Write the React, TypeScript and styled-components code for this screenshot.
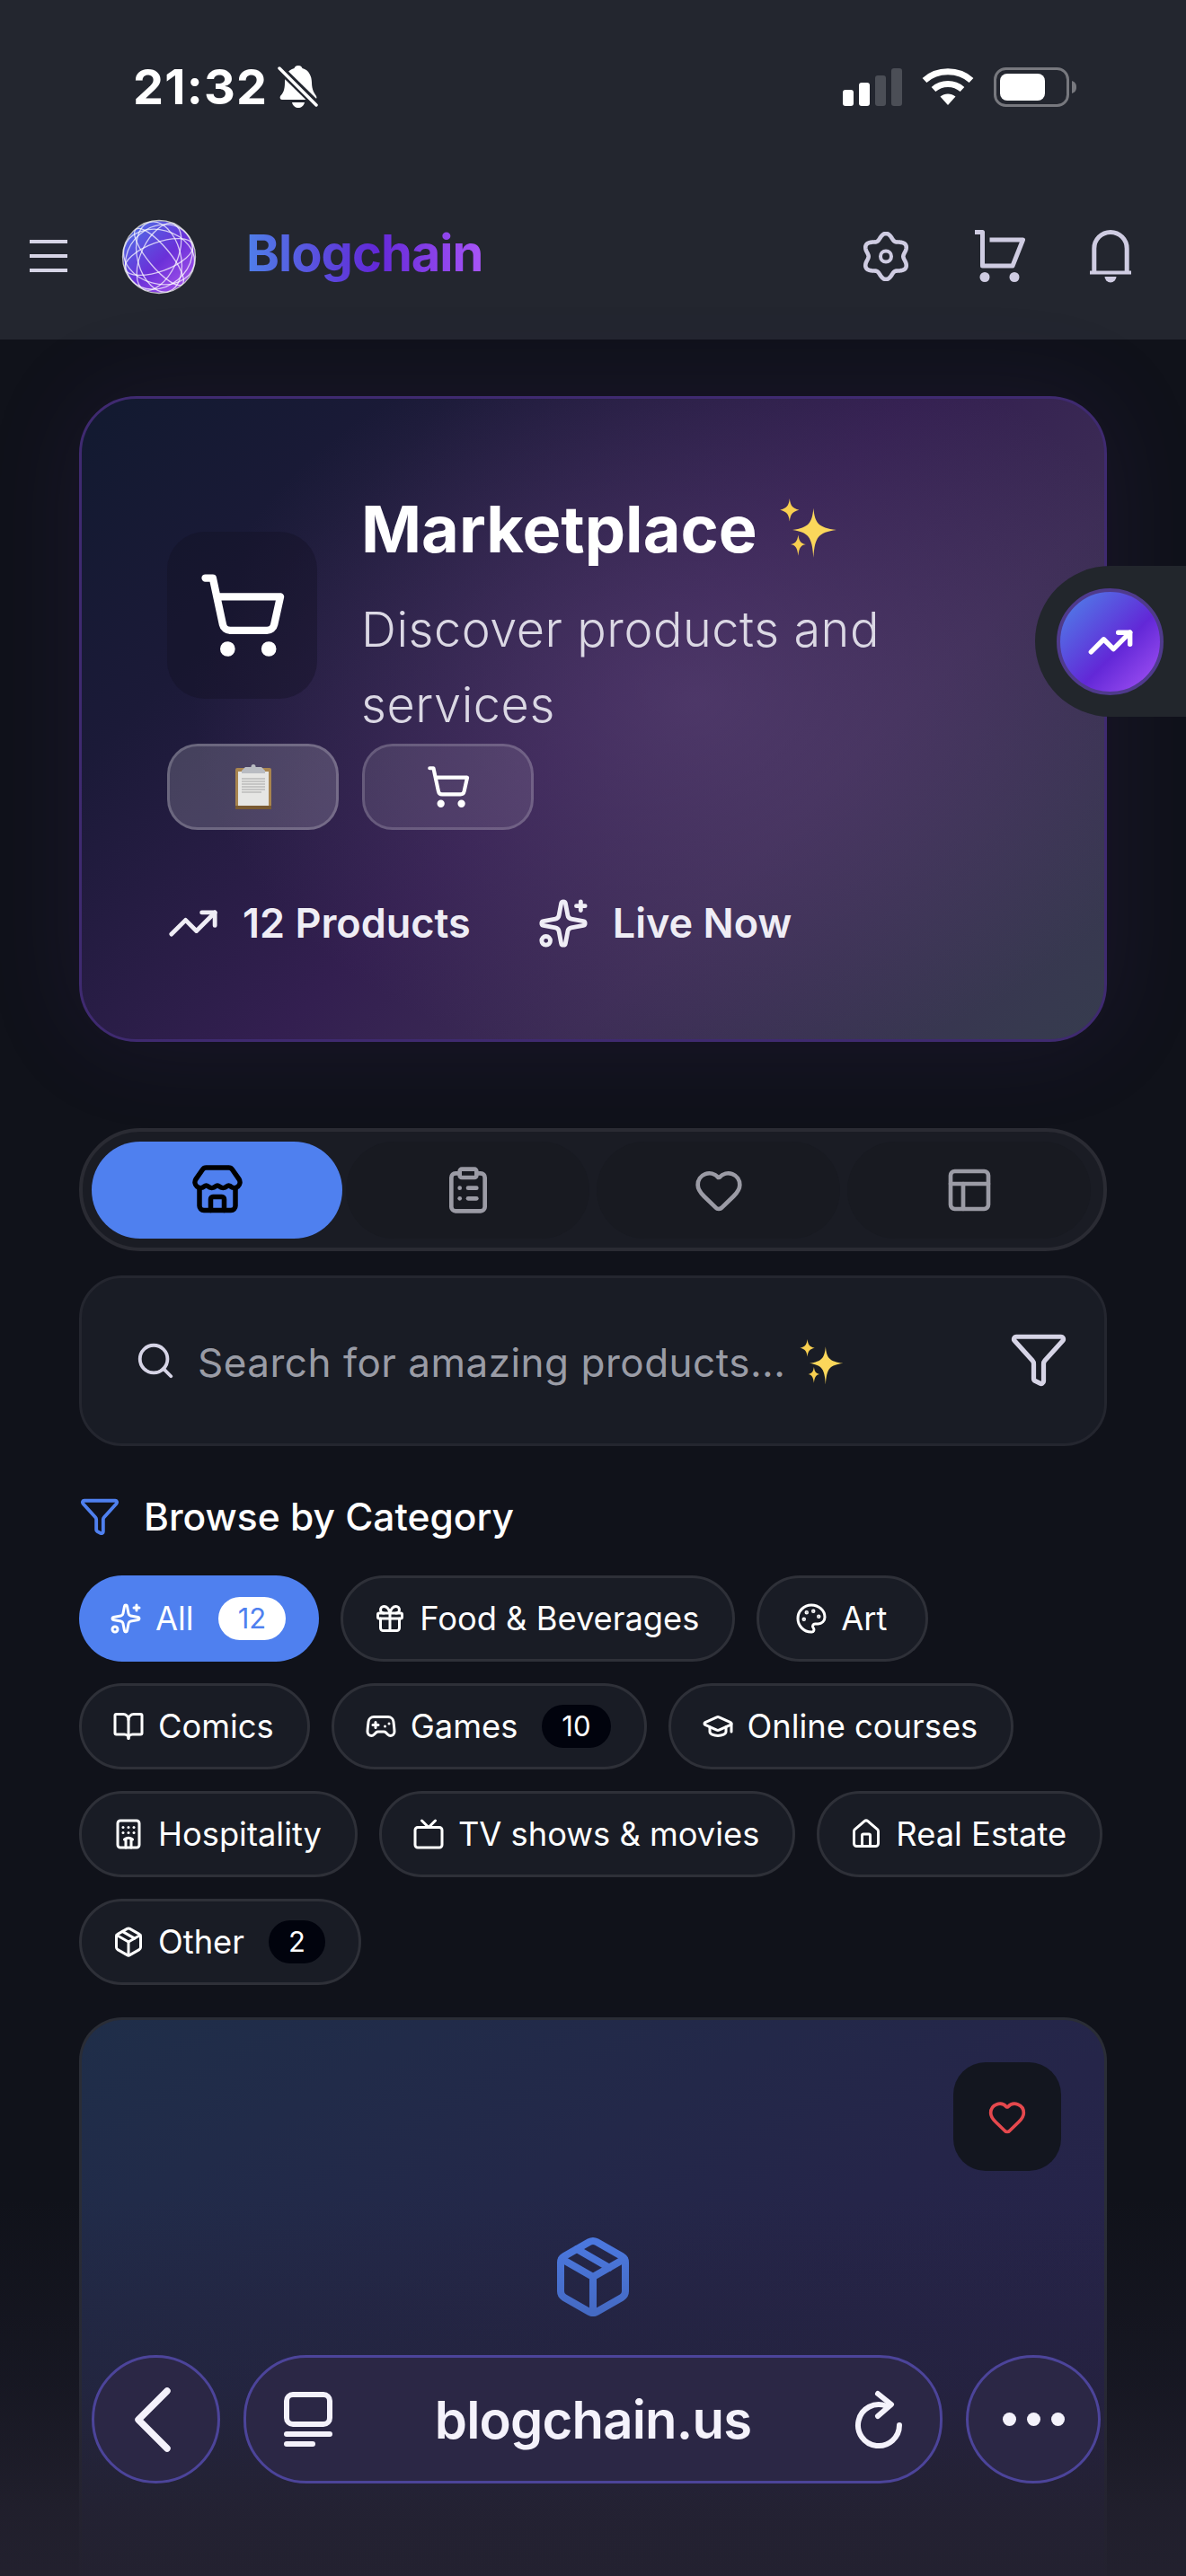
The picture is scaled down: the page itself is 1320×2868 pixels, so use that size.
import React from "react";
import styled, { createGlobalStyle } from "styled-components";
import {
  ShoppingCart, TrendingUp, Sparkles, Store, ClipboardList, Heart,
  PanelsTopLeft, Search, Funnel, Gift, Palette, BookOpen, Gamepad2, GraduationCap, Hotel, Tv,
  House, Package, ChevronLeft,
} from "lucide-react";

const Global = createGlobalStyle`
  html, body { margin: 0; padding: 0; background: #10121a; }
  * { box-sizing: border-box; }
  body { font-family: Inter, "Noto Sans", sans-serif; -webkit-font-smoothing: antialiased; }
`;

const Page = styled.div`
  position: relative; width: 1320px; height: 2868px; overflow: hidden; background: #10121a; color: #fff;
`;
const Header = styled.header`background: #23262f; height: 378px;`;
const StatusBar = styled.div`
  height: 194px; display: flex; align-items: center; justify-content: space-between;
  padding: 0 122px 0 148px;
`;
const TimeGroup = styled.div`display: flex; align-items: center; gap: 11px;`;
const Time = styled.span`font-size: 54px; font-weight: 700; letter-spacing: 1.2px; line-height: 1;`;
const StatusIcons = styled.div`display: flex; align-items: center; gap: 22px;`;
const NavRow = styled.div`
  height: 184px; display: flex; align-items: center; padding: 0 61px 0 33px;
`;
const Brand = styled.div`display: flex; align-items: center; flex: 1;`;
const HamburgerSlot = styled.span`display: flex; margin-right: 59px; margin-top: -2px;`;
const Wordmark = styled.span`
  margin: -6px 0 0 54px; font-size: 56px; font-weight: 700; letter-spacing: -1px; line-height: 1.2;
  background: linear-gradient(90deg, #4f7fe8, #6228d7 55%, #a855f7);
  -webkit-background-clip: text; background-clip: text; color: transparent;
`;
const NavIcons = styled.div`display: flex; align-items: center; gap: 72px; margin-top: -2px;`;

const Main = styled.main`padding: 63px 88px 0;`;
const Hero = styled.section`
  height: 719px; border: 3px solid #3f2a70; border-radius: 64px; padding: 99px 95px 0;
  background:
    radial-gradient(ellipse 560px 420px at 60% 47%, rgba(96,72,122,.55), rgba(96,72,122,0) 100%),
    linear-gradient(135deg, #121a30 0%, #1b1a38 22%, #331f50 50%, #3c2c55 68%, #363c4e 100%);
  box-shadow: 0 0 110px rgba(90,50,170,.13);
`;
const HeroTop = styled.div`display: flex; align-items: center; gap: 49px;`;
const HeroIconBox = styled.div`
  width: 167px; height: 186px; flex: none; border-radius: 42px; background: rgba(18,16,36,.42);
  display: flex; align-items: center; justify-content: center; color: #fff;
`;
const HeroText = styled.div`flex: 1;`;
const HeroTitle = styled.h1`
  margin: 0 0 24px; font-size: 72px; line-height: 92px; font-weight: 700; display: flex; align-items: center; gap: 22px;
`;
const HeroSub = styled.p`
  margin: 0; font-size: 54px; line-height: 84px; font-weight: 300; color: #dbd8e4; width: 640px; letter-spacing: .55px;
`;
const PillRow = styled.div`display: flex; gap: 26px; margin-top: 1px;`;
const Pill = styled.button<{ $on?: boolean }>`
  width: 191px; height: 96px; border-radius: 34px; padding: 0; color: #fff;
  border: 3px solid ${(p) => (p.$on ? "rgba(255,255,255,.2)" : "rgba(255,255,255,.17)")};
  background: ${(p) => (p.$on ? "rgba(255,255,255,.17)" : "rgba(255,255,255,.1)")};
  display: flex; align-items: center; justify-content: center;
`;
const Stats = styled.div`display: flex; gap: 74px; margin-top: 76px; height: 56px; align-items: center;`;
const Stat = styled.div`
  display: flex; align-items: center; gap: 26px; font-size: 45px; font-weight: 600; color: #efedf5; line-height: 56px;
`;

const Tabs = styled.nav`
  margin-top: 96px; height: 137px; border: 4px solid #2a2b33; border-radius: 68px; background: #1a1c24;
  padding: 11px 10px; display: grid; grid-template-columns: repeat(4, 1fr);
`;
const Tab = styled.button<{ $on?: boolean }>`
  border: 0; padding: 0; height: 108px; border-radius: 54px; display: flex; align-items: center; justify-content: center;
  background: ${(p) => (p.$on ? "#4f80ef" : "#181a21")}; color: ${(p) => (p.$on ? "#000" : "#9b9ba5")};
  margin: ${(p) => (p.$on ? "0" : "0 4px")};
`;
const SearchBox = styled.div`
  margin-top: 27px; height: 190px; border: 3px solid #24262f; border-radius: 48px; background: #191c25;
  display: flex; align-items: center; padding: 0 40px 0 59px;
`;
const SearchIconSlot = styled.span`display: flex; color: #d6d4e6; margin-right: 24px;`;
const Placeholder = styled.span`
  flex: 1; display: flex; align-items: center; gap: 14px; font-size: 44px; color: #9a9ca6; font-weight: 400;
  letter-spacing: .5px; margin-top: 4px;
`;
const FilterSlot = styled.span`display: flex; color: #d6d4e6; margin-top: -4px;`;

const CatHead = styled.h2`
  margin: 50px 0 0; height: 56px; display: flex; align-items: center; gap: 26px; font-size: 42.5px; font-weight: 500; color: #fff;
`;
const CatIcon = styled.span`display: flex; color: #4f80ef;`;
const Chips = styled.div`margin-top: 38px; display: flex; flex-wrap: wrap; gap: 24px;`;
const Chip = styled.button<{ $on?: boolean }>`
  height: 96px; min-width: 191px; border-radius: 48px; padding: 0 37px 0 34px; display: flex; align-items: center;
  justify-content: center; gap: 15px;
  font-family: inherit; font-size: 36.3px; font-weight: 400; color: #fff; white-space: nowrap;
  background: ${(p) => (p.$on ? "#4f80ef" : "#191c25")};
  border: ${(p) => (p.$on ? "0" : "3px solid #2e3038")};
`;
const Badge = styled.span<{ $on?: boolean }>`
  margin-left: 12px; height: 48px; padding: 0 22px; border-radius: 24px; font-size: 31px; line-height: 48px;
  background: ${(p) => (p.$on ? "#fff" : "#01030d")}; color: ${(p) => (p.$on ? "#4f80ef" : "#fff")};
`;
const Card = styled.article`
  margin-top: 36px; height: 900px; border: 3px solid #2a2d36; border-bottom: 0; border-radius: 48px; position: relative;
  background: linear-gradient(150deg, #1f2e49 0%, #252549 45%, #281f4b 100%);
  display: flex; justify-content: center; padding-top: 238px; color: #4f80ef;
`;
const FavButton = styled.button`
  position: absolute; top: 47px; right: 48px; width: 120px; height: 121px; border: 0; border-radius: 36px;
  background: #13161f; color: #e5484d; display: flex; align-items: center; justify-content: center;
`;

const SideDock = styled.div`
  position: absolute; top: 630px; right: 0; width: 168px; height: 168px; border-radius: 84px 0 0 84px; background: #22262c;
  padding: 25px 0 0 24px;
`;
const SideButton = styled.button`
  width: 119px; height: 119px; border-radius: 50%; border: 4px solid #4f3a8c; padding: 0; color: #fff;
  background: linear-gradient(135deg, #4f7fe8 5%, #6228d7 58%, #a855f7 100%);
  display: flex; align-items: center; justify-content: center;
`;

const BrowserBar = styled.div`
  position: absolute; left: 0; right: 0; bottom: 0; height: 420px;
  background: linear-gradient(to bottom, rgba(34,32,48,0) 0%, rgba(34,32,48,.38) 50%, rgba(35,33,47,.86) 82%, rgba(35,33,47,.96) 100%);
  display: flex; align-items: flex-end; gap: 26px; padding: 0 95px 103px 102px;
`;
const RoundBtn = styled.button<{ $w: number }>`
  width: ${(p) => p.$w}px; height: 143px; flex: none; border-radius: 50%; padding: 0; color: #f4f2fb;
  border: 3px solid #4c449a; background: #2b2745; display: flex; align-items: center; justify-content: center; gap: 12px;
  overflow: hidden;
`;
const ChevronSlot = styled.span`display: flex; margin-left: -8px;`;
const UrlPill = styled.div`
  flex: 1; height: 143px; border-radius: 70px; border: 3px solid #4c449a; background: #2b2745;
  display: flex; align-items: center; justify-content: space-between; padding: 0 40px 0 42px; color: #f4f2fb;
`;
const UrlText = styled.span`font-size: 58px; font-weight: 600; letter-spacing: -.8px; line-height: 1;`;
const Dot = styled.span`width: 15px; height: 15px; border-radius: 50%; background: #f4f2fb;`;

const Sparkle = ({ size }: { size: number }) => (
  <svg width={size} height={size} viewBox="0 0 64 64">
    <path fill="#fbd75b" d="M38 10 C39.5 26 43 30 62 33 C43 36 39.5 40 38 62 C36.5 40 33 36 16 33 C33 30 36.5 26 38 10Z" />
    <path fill="#f8cf50" d="M13 0 C14 8 16 10 23 12 C16 14 14 16 13 24 C12 16 10 14 3 12 C10 10 12 8 13 0Z" />
    <path fill="#f8cf50" d="M22 38 C23 45 25 47 30 48 C25 49 23 51 22 60 C21 51 19 49 14 48 C19 47 21 45 22 38Z" />
  </svg>
);

const Clipboard = () => (
  <svg width="40" height="50" viewBox="0 0 40 50">
    <rect x="0" y="4" width="40" height="46" rx="2" fill="#a9854f" />
    <rect x="0" y="46" width="40" height="4" fill="#7a5a32" />
    <rect x="3" y="8" width="34" height="38" fill="#e6e6e4" />
    <g stroke="#a5a5a5" strokeWidth="1">
      <path d="M7 16h26M7 19h26M7 22h26M7 25h26M7 28h26M7 31h22" />
    </g>
    <path d="M7 7 L11 3 h18 l4 4 v3 H7z" fill="#b9bcc2" />
    <circle cx="20" cy="2.5" r="2.5" fill="#b9bcc2" />
  </svg>
);

const Globe = () => (
  <svg width="86" height="86" viewBox="0 0 86 86">
    <defs>
      <linearGradient id="gl" x1="0.1" y1="0.05" x2="0.9" y2="0.95">
        <stop offset="0" stopColor="#4f6fe6" /><stop offset=".55" stopColor="#6a30d8" /><stop offset="1" stopColor="#a855ec" />
      </linearGradient>
    </defs>
    <circle cx="43" cy="43" r="40" fill="url(#gl)" />
    <g fill="none" stroke="#fff" strokeOpacity=".72" strokeWidth="1.3">
      <circle cx="43" cy="43" r="40.5" />
      <ellipse cx="43" cy="43" rx="40" ry="16" transform="rotate(-20 43 43)" />
      <ellipse cx="43" cy="43" rx="40" ry="30" transform="rotate(15 43 43)" />
      <ellipse cx="43" cy="43" rx="40" ry="12" transform="rotate(50 43 43)" />
      <ellipse cx="43" cy="43" rx="40" ry="24" transform="rotate(75 43 43)" />
      <ellipse cx="43" cy="43" rx="40" ry="20" transform="rotate(115 43 43)" />
      <ellipse cx="43" cy="43" rx="40" ry="33" transform="rotate(140 43 43)" />
    </g>
  </svg>
);

const BellSlash = () => (
  <svg width="46" height="48" viewBox="0 0 46 48" fill="#fff">
    <path d="M23 0 C26 0 27 1.500 27.500 3 C35 5 38 12 38 19 C38 27 41 31 43 34 C44 36 43 38 41 38 H5 C3 38 2 36 3 34 C6 31 8 27 8 19 C8 12 11 5 18.500 3 C19 1.500 20 0 23 0Z" />
    <path d="M16 41 H30 C29 45 26 47 23 47 C20 47 17 45 16 41Z" />
    <path d="M3 4 L44 44" stroke="#23262f" strokeWidth="9" />
    <path d="M2 3 L43 44" stroke="#fff" strokeWidth="3.500" strokeLinecap="round" />
  </svg>
);

const Signal = () => (
  <svg width="66" height="42" viewBox="0 0 66 42">
    <rect x="0" y="24" width="12" height="18" rx="3" fill="#fff" />
    <rect x="18" y="16" width="12" height="26" rx="3" fill="#fff" />
    <rect x="36" y="8" width="12" height="34" rx="3" fill="#4b4e56" />
    <rect x="54" y="0" width="12" height="42" rx="3" fill="#4b4e56" />
  </svg>
);

const Wifi = () => (
  <svg width="58" height="42" viewBox="0 0 58 42" fill="none" stroke="#fff" strokeWidth="7">
    <path d="M3 13.500 C17 0.500 41 0.500 55 13.500" />
    <path d="M13 23.500 C22 15.500 36 15.500 45 23.500" />
    <path d="M29 41 L20.500 31.500 C25.500 27.500 32.500 27.500 37.500 31.500 Z" fill="#fff" stroke="none" />
  </svg>
);

const Battery = () => (
  <svg width="92" height="44" viewBox="0 0 92 44">
    <rect x="1.500" y="1.500" width="81" height="41" rx="12" fill="none" stroke="#77787e" strokeWidth="3" />
    <rect x="7" y="7" width="50" height="30" rx="8" fill="#fff" />
    <path d="M87 15 c3 1 5 3 5 7 s-2 6-5 7z" fill="#77787e" />
  </svg>
);

const Hamburger = () => (
  <svg width="42" height="36" viewBox="0 0 42 36" fill="#d6d4e6">
    <rect y="0" width="42" height="4" />
    <rect y="16" width="42" height="4" />
    <rect y="32" width="42" height="4" />
  </svg>
);

const gearPath = (() => {
  const pts: string[] = [];
  for (let i = 0; i < 120; i++) {
    const t = (i / 120) * Math.PI * 2;
    const r = 22.4 + 3.1 * Math.cos(6 * t);
    const x = 27 + r * Math.sin(t);
    const y = 27.5 - r * Math.cos(t);
    pts.push(`${x.toFixed(2)} ${y.toFixed(2)}`);
  }
  return `M${pts.join("L")}Z`;
})();

const Gear = () => (
  <svg width="54" height="55" viewBox="0 0 54 55" fill="none" stroke="#cfcce2" strokeWidth="4.600">
    <path d={gearPath} strokeLinejoin="round" />
    <circle cx="27" cy="27.500" r="6" strokeWidth="4" />
  </svg>
);

const NavCart = () => (
  <svg width="56" height="58" viewBox="0 0 56 58" fill="none" stroke="#cfcce2" strokeWidth="5">
    <path d="M0 2.500 H8.500 V40 H42 L53.500 11 H16.500" strokeLinejoin="round" />
    <circle cx="11" cy="52.500" r="5.500" fill="#cfcce2" stroke="none" />
    <circle cx="44" cy="52.500" r="5.500" fill="#cfcce2" stroke="none" />
  </svg>
);

const NavBell = () => (
  <svg width="46" height="59" viewBox="0 0 46 59" fill="none" stroke="#cfcce2" strokeWidth="5">
    <path d="M4.800 46 V20.700 A18.200 18.200 0 0 1 41.200 20.700 V46" />
    <path d="M0 47.500 H46" strokeWidth="4" />
    <path d="M16.500 52 H29.500 A6.500 6.500 0 0 1 16.500 52Z" fill="#cfcce2" stroke="none" />
  </svg>
);

const TabsIcon = () => (
  <svg width="54" height="62" viewBox="0 0 54 62" fill="none" stroke="#f4f2fb" strokeWidth="6" strokeLinecap="round">
    <rect x="3" y="3" width="48" height="33" rx="7" />
    <path d="M3 47 H51" />
    <path d="M3 58 H32" />
  </svg>
);

const Reload = () => (
  <svg width="56" height="68" viewBox="0 0 56 68" fill="none" stroke="#f4f2fb" strokeWidth="6" strokeLinecap="round" strokeLinejoin="round">
    <path d="M36 18.500 A23 23 0 1 0 51 40" />
    <path d="M27 5 L42 17 L27 30" />
  </svg>
);

const categories = [
  { label: "All", Icon: Sparkles, badge: "12", on: true },
  { label: "Food & Beverages", Icon: Gift },
  { label: "Art", Icon: Palette },
  { label: "Comics", Icon: BookOpen },
  { label: "Games", Icon: Gamepad2, badge: "10" },
  { label: "Online courses", Icon: GraduationCap },
  { label: "Hospitality", Icon: Hotel },
  { label: "TV shows & movies", Icon: Tv },
  { label: "Real Estate", Icon: House },
  { label: "Other", Icon: Package, badge: "2" },
];

export default function App() {
  return (
    <Page>
      <Global />
      <Header>
        <StatusBar>
          <TimeGroup><Time>21:32</Time><BellSlash /></TimeGroup>
          <StatusIcons><Signal /><Wifi /><Battery /></StatusIcons>
        </StatusBar>
        <NavRow>
          <Brand>
            <HamburgerSlot><Hamburger /></HamburgerSlot>
            <Globe />
            <Wordmark>Blogchain</Wordmark>
          </Brand>
          <NavIcons>
            <Gear />
            <NavCart />
            <NavBell />
          </NavIcons>
        </NavRow>
      </Header>
      <Main>
        <Hero>
          <HeroTop>
            <HeroIconBox><ShoppingCart size={100} strokeWidth={2} /></HeroIconBox>
            <HeroText>
              <HeroTitle>Marketplace <Sparkle size={68} /></HeroTitle>
              <HeroSub>Discover products and services</HeroSub>
            </HeroText>
          </HeroTop>
          <PillRow>
            <Pill $on><Clipboard /></Pill>
            <Pill><ShoppingCart size={50} strokeWidth={2} /></Pill>
          </PillRow>
          <Stats>
            <Stat><TrendingUp size={58} strokeWidth={2} />12 Products</Stat>
            <Stat><Sparkles size={58} strokeWidth={2} />Live Now</Stat>
          </Stats>
        </Hero>
        <Tabs>
          <Tab $on><Store size={60} strokeWidth={2.2} /></Tab>
          <Tab><ClipboardList size={56} strokeWidth={2} /></Tab>
          <Tab><Heart size={56} strokeWidth={2} /></Tab>
          <Tab><PanelsTopLeft size={56} strokeWidth={2} /></Tab>
        </Tabs>
        <SearchBox>
          <SearchIconSlot><Search size={46} strokeWidth={2} /></SearchIconSlot>
          <Placeholder>Search for amazing products... <Sparkle size={52} /></Placeholder>
          <FilterSlot><Funnel size={66} strokeWidth={1.9} /></FilterSlot>
        </SearchBox>
        <CatHead><CatIcon><Funnel size={46} strokeWidth={2} /></CatIcon>Browse by Category</CatHead>
        <Chips>
          {categories.map(({ label, Icon, badge, on }) => (
            <Chip key={label} $on={on}>
              <Icon size={36} strokeWidth={2} />
              {label}
              {badge && <Badge $on={on}>{badge}</Badge>}
            </Chip>
          ))}
        </Chips>
        <Card>
          <FavButton><Heart size={44} strokeWidth={2} /></FavButton>
          <Package size={96} strokeWidth={2} />
        </Card>
      </Main>
      <SideDock><SideButton><TrendingUp size={52} strokeWidth={2.5} /></SideButton></SideDock>
      <BrowserBar>
        <RoundBtn $w={143}><ChevronSlot><ChevronLeft size={128} strokeWidth={1.4} /></ChevronSlot></RoundBtn>
        <UrlPill>
          <TabsIcon />
          <UrlText>blogchain.us</UrlText>
          <Reload />
        </UrlPill>
        <RoundBtn $w={150}><Dot /><Dot /><Dot /></RoundBtn>
      </BrowserBar>
    </Page>
  );
}
